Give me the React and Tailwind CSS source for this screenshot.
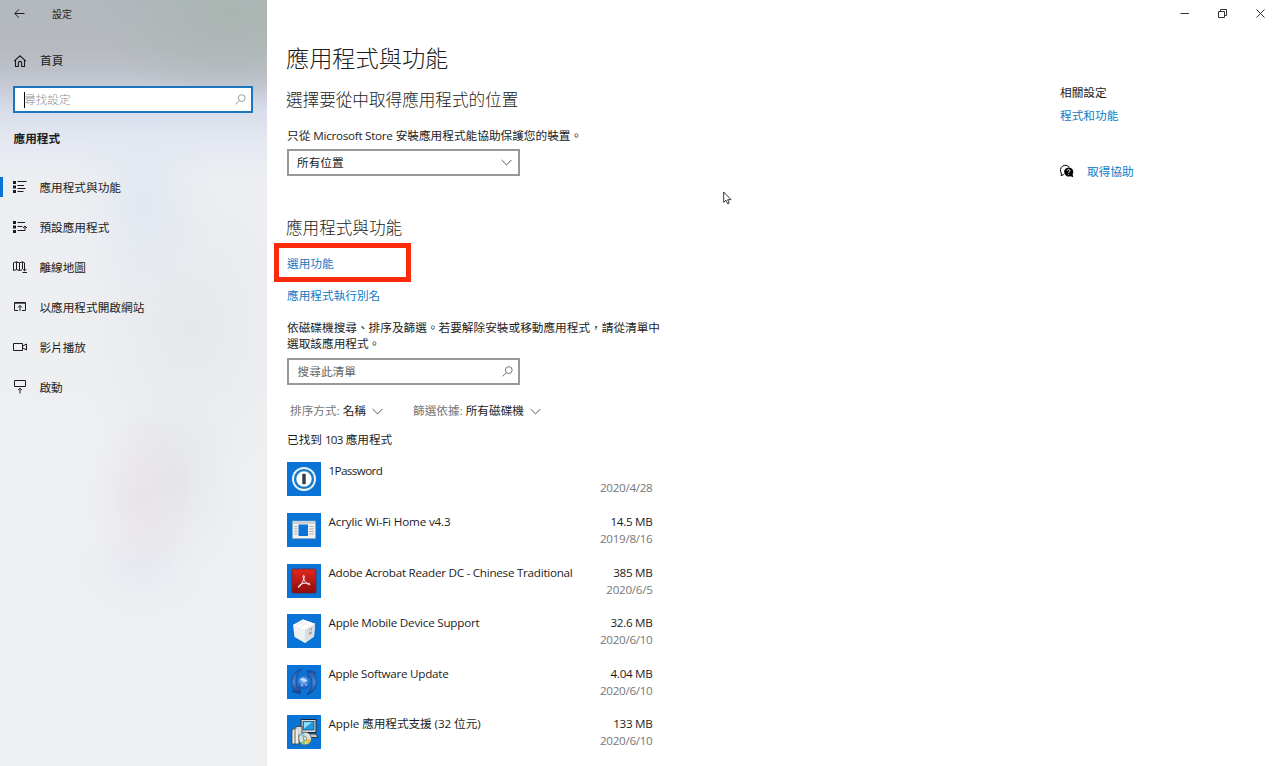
import React from "react";

const cx = "shrink-0 overflow-visible";

function Svg({ w, h, children, className = "" }) {
  return (
    <svg width={w} height={h} viewBox={`0 0 ${w} ${h}`} fill="none" stroke="currentColor" strokeWidth="1" className={`${cx} ${className}`}>
      {children}
    </svg>
  );
}

const Back = () => (
  <Svg w={11} h={10}><path d="M10.500 4.500H.8M5 .3L.8 4.500 5 8.700" /></Svg>
);
const Home = () => (
  <Svg w={12} h={12}><path d="M.2 6.200L6 .8l5.800 5.400M1.500 5.200V11.500H4.400V7.800Q4.400 6.400 6 6.400T7.600 7.800V11.500H10.500V5.200" strokeWidth="1.100" /></Svg>
);
const Search = ({ className }) => (
  <Svg w={11} h={11} className={className}><circle cx="6.800" cy="4.100" r="3.400" strokeWidth=".9" /><path d="M4.400 6.500L.5 10.400" strokeWidth=".9" /></Svg>
);
const Chevron = ({ className }) => (
  <Svg w={11} h={7} className={className}><path d="M.6 1L5.500 5.900 10.400 1" strokeWidth=".9" /></Svg>
);

const dots = (
  <>
    <rect x="0" y="0" width="3" height="3" fill="currentColor" stroke="none" />
    <rect x="0" y="4.500" width="3" height="3" fill="currentColor" stroke="none" />
    <rect x="0" y="9" width="3" height="3" fill="currentColor" stroke="none" />
  </>
);

const AppsIcon = () => (
  <Svg w={14} h={12}>{dots}<path d="M4.500.500H13.500M4.500 4.500H11M4.500 7.500H12.500M4.500 10.500H10.500" /></Svg>
);
const DefaultsIcon = () => (
  <Svg w={14} h={12}>{dots}<path d="M4.500 1.500H12M4.500 5.500H9.500M4.500 9.500H12V5M10 7L12 5 14 7" /></Svg>
);
const MapIcon = () => (
  <Svg w={14} h={12}><path d="M.5 1.800L3.500.8 6.500 1.800 9.500.8 11.500 1.800V9M.5 1.800V9.500L3.500 8.600 6.500 9.500 9 8.800M3.500.8V8.600M6.500 1.800V9.500M9.500.8V8M11.500 5V10M9.700 8L11.500 9.800 13.300 8M9.500 11.500H14" /></Svg>
);
const WebIcon = () => (
  <Svg w={12} h={10}><path d="M4 8.500H.5V.5H11.500V8.500H8M.5 1.200H11.500M6 9V3.500M4 5.500L6 3.500 8 5.500" /></Svg>
);
const VideoIcon = () => (
  <Svg w={14} h={8}><path d="M.5.500H9.500V7.500H.5ZM9.500 3.200L13.500 1V7L9.500 4.800" /></Svg>
);
const StartupIcon = () => (
  <Svg w={12} h={14}><path d="M.5 6.500V.5H11.500V6.500ZM6 13.500V8.300M4 10.200L6 8.200 8 10.200" /></Svg>
);

const nav = [
  { label: "應用程式與功能", icon: <AppsIcon />, active: true },
  { label: "預設應用程式", icon: <DefaultsIcon /> },
  { label: "離線地圖", icon: <MapIcon /> },
  { label: "以應用程式開啟網站", icon: <WebIcon /> },
  { label: "影片播放", icon: <VideoIcon /> },
  { label: "啟動", icon: <StartupIcon /> },
];

function Tile({ children }) {
  return (
    <svg width="34" height="34" viewBox="0 0 34 34" className="shrink-0">
      <rect width="34" height="34" fill="#0a74d6" />
      {children}
    </svg>
  );
}

const OnePassword = () => (
  <Tile>
    <circle cx="17" cy="17" r="12" fill="#e9f3fb" />
    <circle cx="17" cy="17" r="8.900" fill="#fff" stroke="#1a78c4" strokeWidth="2.400" />
    <rect x="15.300" y="11.800" width="3.400" height="10.400" rx=".6" fill="#333c46" />
  </Tile>
);
const Acrylic = () => (
  <Tile>
    <rect x="5.500" y="8" width="23" height="17.500" fill="#f1f1ee" stroke="#8da6bd" strokeWidth=".6" />
    <rect x="6" y="8.400" width="22" height="2.400" fill="#c7cdd2" />
    <rect x="11.500" y="11.500" width="9.500" height="11.500" fill="#0a74d6" />
    <path d="M7 13.500h3.500M7 16h3.500M7 18.500h3.500M7 21h3.500M22 13.500h5M22 16h5M22 18.500h5M22 21h5" stroke="#a5abb0" strokeWidth=".9" />
  </Tile>
);
const Acrobat = () => (
  <Tile>
    <defs>
      <linearGradient id="acro" x1="0" y1="0" x2="0" y2="1">
        <stop offset="0" stopColor="#e2281f" /><stop offset="1" stopColor="#8e0c0c" />
      </linearGradient>
    </defs>
    <rect x="5" y="5" width="24" height="24" rx="1.200" fill="url(#acro)" stroke="#6a2438" strokeWidth=".8" />
    <path d="M11.300 22.800C12.500 20 17.500 18.400 22.300 19.500 23.700 20.300 23 21.300 21.500 20.500 18.300 18.600 15.900 14.500 16.100 12.300 16.300 10.900 17.500 11.100 17.300 12.800 16.900 15.800 14.500 20.500 12.500 22.800 11.700 23.600 11 23.500 11.300 22.800Z" fill="none" stroke="#fff" strokeWidth="1" />
  </Tile>
);
const WhiteBox = () => (
  <Tile>
    <path d="M6 11L16 5.500 28 9.800 27 22.500 18 29 7.500 23Z" fill="#f0f1f2" />
    <path d="M6 11L16 5.500 28 9.800 18 15.500Z" fill="#fff" />
    <path d="M18 15.500L28 9.800 27 22.500 18 29Z" fill="#dcdfe2" />
    <path d="M9.500 11L16.500 7.500M13 12.500L20 8.500" stroke="#e0e3e6" />
    <path d="M22 15.500L25 13.800V19.500L22 21.300Z" fill="#a7acb2" />
    <path d="M22.700 16.500L24.300 15.500V17.200L22.700 18.200Z" fill="#fff" />
  </Tile>
);
const SoftwareUpdate = () => (
  <Tile>
    <defs>
      <linearGradient id="swoosh" x1="0" y1="0" x2="0" y2="1">
        <stop offset="0" stopColor="#1a4da8" /><stop offset=".5" stopColor="#4f86d2" /><stop offset="1" stopColor="#123a86" />
      </linearGradient>
      <radialGradient id="globe" cx=".45" cy=".35" r=".7">
        <stop offset="0" stopColor="#a9d2fa" /><stop offset=".5" stopColor="#3b80dc" /><stop offset="1" stopColor="#123f9e" />
      </radialGradient>
    </defs>
    <path d="M14.500 4C4.500 7 2.500 18 7 25L5 26.500 13.500 29 13 21 10.800 23C7.500 17 8.500 10 14.500 4Z" fill="url(#swoosh)" stroke="#153f8c" strokeWidth=".7" />
    <path d="M19.500 30C29.500 27 31.500 16 27 9L29 7.500 20.500 5 21 13 23.200 11C26.500 17 25.500 24 19.500 30Z" fill="url(#swoosh)" stroke="#153f8c" strokeWidth=".7" />
    <circle cx="17" cy="17.500" r="6.300" fill="url(#globe)" />
    <path d="M13 15Q14.500 12 17 13.500T20.500 15Q18.500 17.500 17 16.300T13 15Z" fill="#cbe4fb" />
    <circle cx="15" cy="20.300" r="1.100" fill="#8fbff3" />
    <circle cx="19.300" cy="19.800" r="1" fill="#8abdf2" />
  </Tile>
);
const Installer = () => (
  <Tile>
    <rect x="14" y="4.500" width="15" height="13" fill="#d8dcdd" stroke="#20262c" />
    <rect x="16" y="6.500" width="11" height="8.500" fill="#1d9be0" stroke="#14456f" strokeWidth=".7" />
    <path d="M17 13.500L25 7.200H17Z" fill="#8fe0f6" />
    <path d="M17 19H29L31 22.500H18Z" fill="#c5c9c8" stroke="#20262c" strokeWidth=".8" />
    <path d="M5 15L8 13H12V29H5Z" fill="#eeeee8" stroke="#3a3a3a" strokeWidth=".8" />
    <path d="M8 13V29M9 11.500H15V28" stroke="#3a3a3a" strokeWidth=".8" fill="#dcdcd4" />
    <circle cx="18" cy="23.500" r="6.300" fill="#d9e3d8" stroke="#55606a" strokeWidth=".7" />
    <path d="M18 23.500L13 20A6.200 6.200 0 0 1 17 17.400Z" fill="#7ec7dc" />
    <path d="M18 23.500L24 24.500A6.200 6.200 0 0 1 20 29.300Z" fill="#dcc94c" />
    <path d="M18 23.500L14 28A6.200 6.200 0 0 0 18 29.600Z" fill="#8cc56c" />
    <circle cx="18" cy="23.500" r="1.700" fill="#fff" stroke="#4a5560" strokeWidth=".7" />
  </Tile>
);

const tight = "tracking-[-0.260px]";
const apps = [
  { name: "1Password", size: "", date: "2020/4/28", icon: <OnePassword />, track: "tracking-[-0.600px]" },
  { name: "Acrylic Wi-Fi Home v4.3", size: "14.5 MB", date: "2019/8/16", icon: <Acrylic />, track: "tracking-[-0.160px]" },
  { name: "Adobe Acrobat Reader DC - Chinese Traditional", size: "385 MB", date: "2020/6/5", icon: <Acrobat />, track: tight },
  { name: "Apple Mobile Device Support", size: "32.6 MB", date: "2020/6/10", icon: <WhiteBox />, track: "tracking-[-0.220px]" },
  { name: "Apple Software Update", size: "4.04 MB", date: "2020/6/10", icon: <SoftwareUpdate />, track: tight },
  { name: "Apple 應用程式支援 (32 位元)", size: "133 MB", date: "2020/6/10", icon: <Installer />, track: "tracking-[-0.080px]" },
];

function Sidebar() {
  return (
    <aside className="flex h-full w-[267px] shrink-0 flex-col bg-[radial-gradient(ellipse_70px_110px_at_145px_200px,#dde6f2bb_0%,#dde6f255_45%,#dde6f200_100%),radial-gradient(ellipse_50px_90px_at_142px_500px,#eadfe4aa_0%,#eadfe455_45%,#eadfe400_100%),radial-gradient(ellipse_65px_90px_at_175px_480px,#dfe1e5aa_0%,#dfe1e555_45%,#dfe1e500_100%),radial-gradient(ellipse_60px_45px_at_142px_567px,#e2e8f499_0%,#e2e8f400_100%),radial-gradient(ellipse_110px_150px_at_190px_330px,#e2e4e8aa_0%,#e2e4e800_100%),radial-gradient(ellipse_130px_90px_at_230px_15px,#a8b4aecc_0%,#a8b4ae66_50%,#a8b4ae00_100%),linear-gradient(to_bottom,#b2b8be_0px,#b6babf_45px,#bcc0c8_70px,#c8cdd9_90px,#d8deea_112px,#e4e8f1_140px,#eceef1_180px,#edeff1_400px,#eeeff1_766px)]">
      <div className="flex h-[27px] items-center pl-[14px]">
        <Back />
        <span className="ml-[27px] text-[10px] leading-none">設定</span>
      </div>
      <div className="mt-[20px] flex h-[27px] items-center pl-[14px]">
        <Home />
        <span className="ml-[14px]">首頁</span>
      </div>
      <div className="mt-[12px] ml-[13px] flex h-[27px] w-[240px] items-center border-2 border-[#1a76bd] bg-white pr-[5px] pl-[9px] text-[#8f8f8f]">
        <span className="h-[16px] w-px bg-black" />
        <span className="-ml-px flex-1 pt-px font-light">尋找設定</span>
        <Search />
      </div>
      <div className="mt-[13px] flex h-[26px] items-center pl-[13.500px] font-bold">應用程式</div>
      <nav className="mt-[15px] flex flex-col">
        {nav.map((n) => (
          <div key={n.label} className="flex h-[40px] items-center">
            <span className={n.active ? "h-[20px] w-[3px] bg-[#0a74d6]" : "h-[20px] w-[3px]"} />
            <span className="ml-[9px] flex w-[16px] justify-center">{n.icon}</span>
            <span className="ml-[11.400px] pt-px">{n.label}</span>
          </div>
        ))}
      </nav>
    </aside>
  );
}

function Content() {
  return (
    <main className="flex w-[400px] shrink-0 flex-col pl-[20px]">
      <h1 className="mt-[40px] -ml-px h-[36px] text-[23.200px] leading-[36px] font-light">應用程式與功能</h1>
      <h2 className="mt-[12px] -ml-px h-[24px] text-[16.600px] leading-[24px] font-light">選擇要從中取得應用程式的位置</h2>
      <p className="mt-[16px] h-[16px] leading-[16px] whitespace-nowrap">只從 <span className="tracking-[-0.270px]">Microsoft Store</span> 安裝應用程式能協助保護您的裝置。</p>
      <div className="mt-[5px] flex h-[27px] w-[233px] items-center justify-between border-2 border-[#999] pr-[6px] pl-[8px]">
        <span>所有位置</span>
        <Chevron className="text-[#444]" />
      </div>
      <h2 className="mt-[40px] -ml-px h-[24px] text-[16.600px] leading-[24px] font-light">應用程式與功能</h2>
      <div className="mt-[3px] -ml-[13px] flex h-[39px] w-[137px] items-center border-[5px] border-[#fb2a0a] pt-[2px] pl-[8px] text-[#0f7ac6]">選用功能</div>
      <a className="mt-[6px] h-[16px] leading-[16px] text-[#0f7ac6]">應用程式執行別名</a>
      <p className="mt-[16px] h-[32px] leading-[16px] whitespace-nowrap">
        依磁碟機搜尋、排序及篩選。若要解除安裝或移動應用程式，請從清單中
        <br />
        選取該應用程式。
      </p>
      <div className="mt-[6px] flex h-[27px] w-[233px] items-center justify-between border-2 border-[#999] pr-[5px] pl-[8.600px] text-[#666]">
        <span>搜尋此清單</span>
        <Search />
      </div>
      <div className="mt-[18px] flex h-[16px] items-center pl-[3px] leading-[16px] whitespace-nowrap">
        <span className="text-[#777]">排序方式:</span>
        <span className="ml-[3px]">名稱</span>
        <Chevron className="ml-[6px] text-[#444]" />
        <span className="ml-[30px] text-[#777]">篩選依據:</span>
        <span className="ml-[3px]">所有磁碟機</span>
        <Chevron className="ml-[6px] text-[#444]" />
      </div>
      <p className="mt-[13px] h-[16px] leading-[16px]">已找到 <span className="tracking-[-0.800px]">103</span> 應用程式</p>
      <ul className="mt-[14.400px] flex w-[365.500px] flex-col">
        {apps.map((a) => (
          <li key={a.name} className="flex h-[50.600px] items-start">
            {a.icon}
            <span className={`ml-[7.500px] flex-1 leading-[17px] whitespace-nowrap ${a.track}`}>{a.name}</span>
            <span className="flex flex-col text-right leading-[17px] tracking-[-0.300px]">
              <span className="h-[17px]">{a.size}</span>
              <span className="text-[#777]">{a.date}</span>
            </span>
          </li>
        ))}
      </ul>
    </main>
  );
}

function Related() {
  return (
    <section className="flex h-full flex-1 flex-col pl-[393px]">
      <div className="flex h-[27px] items-center justify-end pr-[15px] text-[#333]">
        <Svg w={9} h={9}><path d="M.5 4.500H9" /></Svg>
        <Svg w={9} h={9} className="ml-[29px]"><path d="M.5 2.500H6.500V8.500H.5ZM2.500 2.500V.5H8.500V6.500H6.500" /></Svg>
        <Svg w={9} h={9} className="ml-[29px]"><path d="M.5.5L8.500 8.500M8.500.5L.5 8.500" /></Svg>
      </div>
      <div className="mt-[58px] h-[16px] leading-[16px]">相關設定</div>
      <a className="mt-[7px] h-[16px] leading-[16px] text-[#0f7ac6]">程式和功能</a>
      <div className="mt-[40px] flex h-[16px] items-center leading-[16px]">
        <Svg w={14} h={14} className="-mt-[2px] text-black">
          <path d="M1.300 12V9A4.800 4.800 0 1 1 9.300 3.400M1.200 11.500L3.800 10.600" strokeWidth="1" />
          <path d="M8.700 3.400A4.600 4.600 0 0 1 12.600 10.500L13.300 13.300 10.600 12.200A4.600 4.600 0 1 1 8.700 3.400Z" fill="currentColor" stroke="none" />
          <path d="M7.300 6.700Q7.400 5.500 8.700 5.500T10 6.800Q10 7.600 8.700 8.300V9M8.700 9.800V10.700" stroke="#fff" strokeWidth=".9" />
        </Svg>
        <a className="ml-[13px] text-[#0f7ac6]">取得協助</a>
      </div>
    </section>
  );
}

export default function App() {
  return (
    <div className="relative flex h-[766px] w-[1280px] overflow-hidden bg-white font-['Open_Sans','Noto_Sans_CJK_TC',sans-serif] text-[11.670px] text-[#1c1c1c]">
      <Sidebar />
      <Content />
      <Related />
      <svg width="9" height="14" viewBox="0 0 9 14" className="absolute top-[191px] left-[723px]">
        <path d="M.7 1V11.300L3 9.200 4.600 12.800 6.200 12.100 4.700 8.700H8Z" fill="#fff" stroke="#222" strokeWidth=".9" />
      </svg>
    </div>
  );
}
